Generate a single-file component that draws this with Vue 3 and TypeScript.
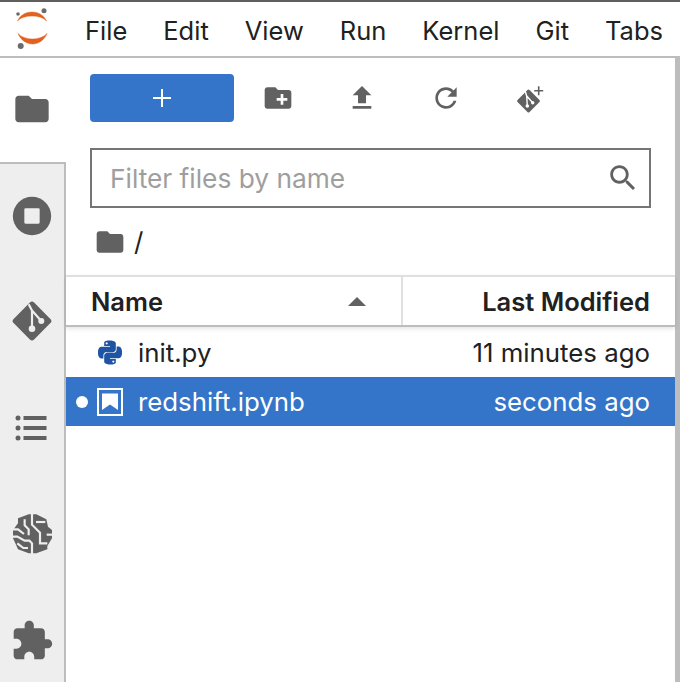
<script setup lang="ts">
const menus: string[] = ['File', 'Edit', 'View', 'Run', 'Kernel', 'Git', 'Tabs']
const folder = 'M10 4H4c-1.1 0-1.99.9-1.99 2L2 18c0 1.1.9 2 2 2h16c1.1 0 2-.9 2-2V8c0-1.1-.9-2-2-2h-8l-2-2z'
const py = 'M14.25.18l.9.2.73.26.59.3.45.32.34.34.25.34.16.33.1.3.04.26.02.2-.01.13V8.5l-.05.63-.13.55-.21.46-.26.38-.3.31-.33.25-.35.19-.35.14-.33.1-.3.07-.26.04-.21.02H8.77l-.69.05-.59.14-.5.22-.41.27-.33.32-.27.35-.2.36-.15.37-.1.35-.07.32-.04.27-.02.21v3.06H3.17l-.21-.03-.28-.07-.32-.12-.35-.18-.36-.26-.36-.36-.35-.46-.32-.59-.28-.73-.21-.88-.14-1.05-.05-1.23.06-1.22.16-1.04.24-.87.32-.71.36-.57.4-.44.42-.33.42-.24.4-.16.36-.1.32-.05.24-.01h.16l.06.01h8.16v-.83H6.18l-.01-2.75-.02-.37.05-.34.11-.31.17-.28.25-.26.31-.23.38-.2.44-.18.51-.15.58-.12.64-.1.71-.06.77-.04.84-.02 1.27.05zm-6.3 1.98l-.23.33-.08.41.08.41.23.34.33.22.41.09.41-.09.33-.22.23-.34.08-.41-.08-.41-.23-.33-.33-.22-.41-.09-.41.09zm13.09 3.95l.28.06.32.12.35.18.36.27.36.35.35.47.32.59.28.73.21.88.14 1.04.05 1.23-.06 1.23-.16 1.04-.24.86-.32.71-.36.57-.4.45-.42.33-.42.24-.4.16-.36.09-.32.05-.24.02-.16-.01h-8.22v.82h5.84l.01 2.76.02.36-.05.34-.11.31-.17.29-.25.25-.31.24-.38.2-.44.17-.51.15-.58.13-.64.09-.71.07-.77.04-.84.01-1.27-.04-1.07-.14-.9-.2-.73-.25-.59-.3-.45-.33-.34-.34-.25-.34-.16-.33-.1-.3-.04-.25-.02-.2.01-.13v-5.34l.05-.64.13-.54.21-.46.26-.38.3-.32.33-.24.35-.2.35-.14.33-.1.3-.06.26-.04.21-.02.13-.01h5.84l.69-.05.59-.14.5-.21.41-.28.33-.32.27-.35.2-.36.15-.36.1-.35.07-.32.04-.28.02-.21V6.07h2.09l.14.01zm-6.47 14.25l-.23.33-.08.41.08.41.23.33.33.23.41.08.41-.08.33-.23.23-.33.08-.41-.08-.41-.23-.33-.33-.23-.41-.08-.41.08z'
</script>

<template>
  <div class="app">
    <header class="menubar">
      <svg class="logo" width="64" height="54" viewBox="0 0 64 54">
        <path d="M17.500 19C23 7 41 7 46.500 19C41 12.300 23 12.300 17.500 19Z" fill="#e2611f" stroke="#e2611f" stroke-width=".5" />
        <path d="M18 31.500C24 45.500 41 45.500 47 31.500C41 38.800 24 38.800 18 31.500Z" fill="#e2611f" stroke="#e2611f" stroke-width=".5" />
        <circle cx="44" cy="8.700" r="2.500" fill="#6b6b6b" />
        <circle cx="18" cy="12" r="1.800" fill="#6b6b6b" />
        <circle cx="20.700" cy="44" r="3" fill="#6b6b6b" />
      </svg>
      <nav class="menus">
        <span v-for="m in menus" :key="m" class="menu">{{ m }}</span>
      </nav>
    </header>

    <div class="body">
      <aside class="sidebar">
        <div class="tab active">
          <svg width="40" height="40" viewBox="0 0 24 24" fill="#616161"><path :d="folder" /></svg>
        </div>
        <div class="tab first">
          <svg width="46" height="46" viewBox="0 0 24 24"><circle cx="12" cy="12" r="10" fill="#616161" /><rect x="8" y="8" width="8" height="8" rx=".6" fill="#eee" /></svg>
        </div>
        <div class="tab">
          <svg width="44" height="44" viewBox="0 0 44 44">
            <rect x="7.500" y="7.500" width="29" height="29" rx="3" transform="rotate(45 22 22)" fill="#616161" />
            <path d="M18.700 5.300L22 11.500V29.700M22 11.500L31.300 22" stroke="#eee" stroke-width="2.200" fill="none" />
            <circle cx="22" cy="29.700" r="3.300" fill="#eee" /><circle cx="31.300" cy="22" r="3" fill="#eee" />
          </svg>
        </div>
        <div class="tab">
          <svg width="34" height="28" viewBox="0 0 34 28" fill="#616161">
            <circle cx="3" cy="4" r="2.500" /><circle cx="3" cy="14" r="2.500" /><circle cx="3" cy="24" r="2.500" />
            <rect x="8.500" y="2" width="23" height="4" /><rect x="8.500" y="12" width="23" height="4" /><rect x="8.500" y="22" width="23" height="4" />
          </svg>
        </div>
        <div class="tab">
          <svg width="50" height="50" viewBox="-3 -3 150 150">
            <path d="M62 13H85L115 28L120 50L132 60V85L118 108V118L85 130H62L30 118L22 100L15 85V60L30 40V25Z" fill="#616161" />
            <g fill="none" stroke="#eee" stroke-width="6.500">
              <path d="M72 5V44L96 68V100H118" />
              <path d="M84 36H112" />
              <path d="M136 74H116" />
              <path d="M50 28V46L62 58V76" />
              <path d="M10 58H30L48 72" />
              <path d="M10 80H28L50 92H64L72 100V136" />
              <path d="M28 100L46 114H60" />
            </g>
          </svg>
        </div>
        <div class="tab">
          <svg width="44" height="44" viewBox="0 0 24 24" fill="#616161"><path d="M20.500 11H19V7c0-1.100-.9-2-2-2h-4V3.500C13 2.120 11.880 1 10.500 1S8 2.120 8 3.500V5H4c-1.100 0-1.990.9-1.990 2v3.800H3.500c1.490 0 2.700 1.210 2.700 2.700s-1.210 2.700-2.700 2.700H2V20c0 1.100.9 2 2 2h3.800v-1.500c0-1.490 1.210-2.700 2.700-2.700 1.490 0 2.700 1.210 2.700 2.700V22H17c1.100 0 2-.9 2-2v-4h1.500c1.380 0 2.500-1.120 2.500-2.500S21.880 11 20.500 11z" /></svg>
        </div>
      </aside>

      <main class="browser">
        <div class="toolbar">
          <button class="new-btn">
            <svg width="20" height="20" viewBox="0 0 20 20"><path d="M10 1V19M1 10H19" stroke="#fff" stroke-width="2" /></svg>
          </button>
          <div class="tools">
            <span class="tool"><svg width="32" height="32" viewBox="0 0 24 24" fill="#616161"><path d="M20 6h-8l-2-2H4c-1.110 0-1.990.89-1.990 2L2 18c0 1.110.89 2 2 2h16c1.110 0 2-.89 2-2V8c0-1.110-.89-2-2-2zm-1 8h-3v3h-2v-3h-3v-2h3V9h2v3h3v2z" /></svg></span>
            <span class="tool"><svg width="32" height="32" viewBox="0 0 24 24" fill="#616161"><path d="M9 16h6v-6h4l-7-7-7 7h4zm-4 2h14v2H5z" /></svg></span>
            <span class="tool"><svg width="32" height="32" viewBox="0 0 24 24" fill="#616161"><path d="M17.650 6.350C16.200 4.900 14.210 4 12 4c-4.420 0-7.990 3.580-7.990 8s3.570 8 7.990 8c3.730 0 6.840-2.550 7.730-6h-2.080c-.82 2.330-3.040 4-5.650 4-3.310 0-6-2.690-6-6s2.690-6 6-6c1.660 0 3.140.69 4.220 1.780L13 11h7V4l-2.350 2.350z" /></svg></span>
            <span class="tool"><svg width="32" height="32" viewBox="0 0 32 32">
              <rect x="6" y="10.500" width="17" height="17" rx="1.500" transform="rotate(45 14.500 19)" fill="#616161" />
              <path d="M11 8.700L12.700 14L13.300 24M12.700 14L18.700 20.700" stroke="#fff" stroke-width="1.400" fill="none" />
              <circle cx="13.300" cy="24" r="1.800" fill="#fff" /><circle cx="18.700" cy="20.700" r="1.700" fill="#fff" />
              <path d="M24.700 4.200V13.200M20.200 8.700H29.200" stroke="#616161" stroke-width="1.600" />
            </svg></span>
          </div>
        </div>

        <div class="filter">
          <span class="placeholder">Filter files by name</span>
          <svg width="34" height="34" viewBox="0 0 24 24" fill="#616161"><path d="M15.500 14h-.79l-.28-.27C15.410 12.590 16 11.110 16 9.500 16 5.910 13.090 3 9.500 3S3 5.910 3 9.500 5.910 16 9.500 16c1.610 0 3.090-.59 4.230-1.570l.27.28v.79l5 4.990L20.490 19l-4.990-5zm-6 0C7.010 14 5 11.990 5 9.500S7.010 5 9.500 5 14 7.010 14 9.500 11.990 14 9.500 14z" /></svg>
        </div>

        <div class="crumbs">
          <svg width="32" height="32" viewBox="0 0 24 24" fill="#616161"><path :d="folder" /></svg>
          <span class="slash">/</span>
        </div>

        <div class="list-head">
          <div class="col name">
            <span>Name</span>
            <svg width="18" height="9" viewBox="0 0 18 9"><path d="M9 0L18 9H0Z" fill="#616161" /></svg>
          </div>
          <div class="col modified">Last Modified</div>
        </div>

        <div class="row">
          <span class="dot-slot"></span>
          <span class="icon-slot"><svg width="24" height="25" viewBox="0 0 24 24" fill="#1f54a5"><path :d="py" /></svg></span>
          <span class="fname">init.py</span>
          <span class="fdate">11 minutes ago</span>
        </div>
        <div class="row selected">
          <span class="dot-slot"><i class="dot"></i></span>
          <span class="icon-slot"><svg width="26" height="28" viewBox="0 0 26 28">
            <rect x="1" y="1" width="24" height="26" fill="none" stroke="#fff" stroke-width="2" />
            <path d="M5 5.500H21V22L13 16.500L5 22Z" fill="#fff" />
          </svg></span>
          <span class="fname">redshift.ipynb</span>
          <span class="fdate">seconds ago</span>
        </div>
      </main>
    </div>
  </div>
</template>

<style>
html, body { margin: 0; background: #fff; overflow: hidden; }
</style>

<style scoped>
.app {
  width: 680px;
  height: 682px;
  box-sizing: border-box;
  border-top: 2px solid #5f5f5f;
  display: flex;
  flex-direction: column;
  font-family: Inter, "Liberation Sans", sans-serif;
  color: #212121;
  overflow: hidden;
}
.menubar {
  height: 56px;
  flex: none;
  box-sizing: border-box;
  border-bottom: 2px solid #bdbdbd;
  display: flex;
  align-items: center;
}
.logo { flex: none; }
.menus { display: flex; margin: 2px 0 0 21px; gap: 36px; font-size: 25.500px; white-space: nowrap; }
.body { flex: 1; display: flex; min-height: 0; }
.sidebar { width: 66px; flex: none; display: flex; flex-direction: column; }
.tab {
  height: 106.600px;
  flex: none;
  box-sizing: border-box;
  background: #eee;
  border-right: 2px solid #bdbdbd;
  display: flex;
  align-items: center;
  justify-content: center;
}
.tab.active {
  height: 104px;
  background: #fff;
  border-right: 0;
  padding: 0 2px 2px 0;
}
.tab.first { border-top: 2px solid #bdbdbd; height: 106px; }
.browser { flex: 1; min-width: 0; border-right: 5px solid #bdbdbd; display: flex; flex-direction: column; }
.toolbar { display: flex; align-items: center; padding: 16px 0 0 24px; height: 48px; flex: none; }
.new-btn {
  width: 144px;
  height: 48px;
  border: 0;
  border-radius: 4px;
  background: #3575c9;
  padding: 0;
  display: flex;
  align-items: center;
  justify-content: center;
}
.tools { display: flex; margin-left: 2px; }
.tool { width: 84px; height: 48px; display: flex; align-items: center; justify-content: center; }
.filter {
  margin: 26px 24px 0;
  height: 60px;
  flex: none;
  box-sizing: border-box;
  border: 2px solid #757575;
  display: flex;
  align-items: center;
  justify-content: space-between;
  padding: 0 9px 0 18px;
  font-size: 26.300px;
}
.placeholder { color: #9e9e9e; }
.crumbs { height: 67px; flex: none; display: flex; align-items: center; padding-left: 28px; gap: 8px; }
.slash { font-size: 26px; }
.list-head {
  height: 52px;
  flex: none;
  box-sizing: border-box;
  border-top: 2px solid #e0e0e0;
  border-bottom: 2px solid #bdbdbd;
  box-shadow: 0 2px 4px rgba(0, 0, 0, .1);
  display: flex;
  font-size: 25.500px;
  font-weight: 600;
}
.col { display: flex; align-items: center; box-sizing: border-box; }
.col.name { width: 337px; padding: 0 35px 0 25px; justify-content: space-between; border-right: 2px solid #e0e0e0; }
.col.modified { flex: 1; justify-content: flex-end; padding-right: 25px; }
.row { height: 50px; flex: none; display: flex; align-items: center; font-size: 25.800px; padding-right: 25px; }
.row.selected { background: #3575c9; color: #fff; height: 49px; }
.dot-slot { width: 30px; flex: none; display: flex; justify-content: center; padding-left: 2px; box-sizing: border-box; }
.dot { width: 12px; height: 12px; border-radius: 50%; background: #fff; }
.icon-slot { width: 28px; flex: none; display: flex; justify-content: center; }
.fname { margin-left: 14px; flex: 1; }
.fdate { white-space: nowrap; }
</style>
